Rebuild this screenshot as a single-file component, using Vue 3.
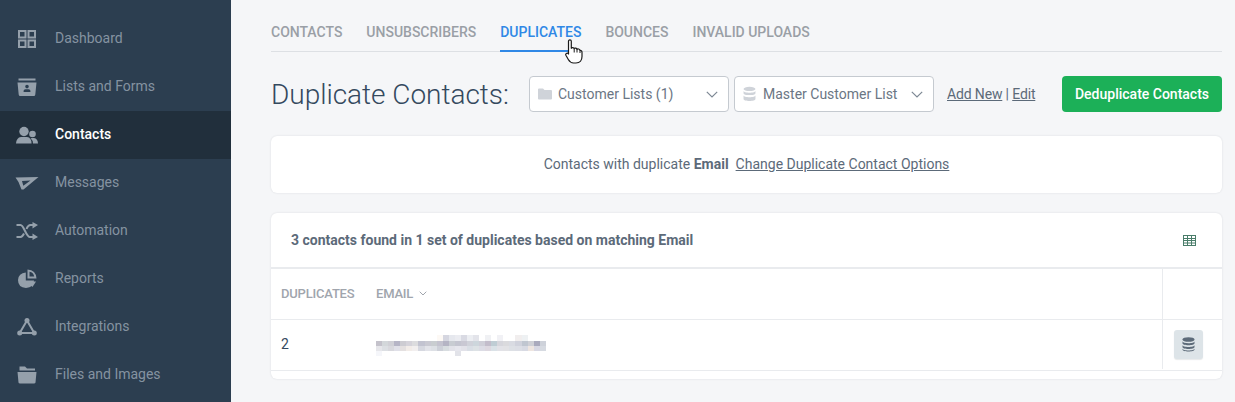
<script setup>
const navItems = [
  { label: 'Dashboard', icon: 'grid' },
  { label: 'Lists and Forms', icon: 'lists' },
  { label: 'Contacts', icon: 'users', active: true },
  { label: 'Messages', icon: 'plane' },
  { label: 'Automation', icon: 'shuffle' },
  { label: 'Reports', icon: 'pie' },
  { label: 'Integrations', icon: 'nodes' },
  { label: 'Files and Images', icon: 'folder' }
]
const tabs = [
  { label: 'Contacts' },
  { label: 'Unsubscribers' },
  { label: 'Duplicates', active: true },
  { label: 'Bounces' },
  { label: 'Invalid Uploads' }
]
const w = '#ffffff'
const pixelRows = [
  [w,w,w,w,w,w,w,w,w,w,'#fdf9f5','#d5d6e0','#e6e8ee','#ebecf1','#d9dae3','#eceef2','#e3e4ea',w,'#f0f1f4',w,'#f1f1f5',w,w,'#f1eeee','#eef1f3',w,w,w],
  ['#c4c2cb','#d3d7da','#d0d0d6','#b6b5c6','#cdccd2','#d5d3da','#dcdcde','#c2c3d0','#c9c9d2','#c9cdd0','#c4c3cf','#b5b4c4','#c8ccd2','#c4c5d0','#c9c8d3','#d0d2da','#cdd6dc','#cfcfd8','#c3bdcb','#bfcdd4','#d6d6dc','#dadadd','#d9dbe2','#d0d2dc','#c0c6d0','#cfd0d6','#aaaabd','#ced2da'],
  ['#e6e6ea','#dcdfe3','#d8d8dd','#e0e0e8','#e4e0e0','#f2ece8','#f2efef','#d6d8e0','#e2e3e9','#dde0e5','#cdd0d8','#d8dde0','#e2e2e9','#e6e6ed','#e2e2e9','#d9dee5','#dde2e5','#dcdce5','#ddd8e0','#dae2e7','#e2e2e7','#e2e2e5','#dde0e5','#dcdee5','#d8dae3','#eee5e0','#d8d8e3','#d6dae1'],
  ['#f5f6fa',w,w,w,w,w,w,w,w,w,w,w,w,'#e2e3e9',w,w,w,w,w,w,w,w,w,w,w,w,w,w]
]
const pixels = pixelRows.flat()
</script>

<template>
  <div class="app">
    <aside class="sidebar">
      <a v-for="item in navItems" :key="item.label" class="nav-item" :class="{ active: item.active }">
        <span class="nav-icon">
          <svg v-if="item.icon === 'grid'" width="20" height="20" viewBox="0 0 20 20" fill="none" stroke="currentColor" stroke-width="2">
            <rect x="2" y="2" width="6.5" height="6.5" /><rect x="11.5" y="2" width="6.5" height="6.5" />
            <rect x="2" y="11.5" width="6.5" height="6.5" /><rect x="11.5" y="11.5" width="6.5" height="6.5" />
          </svg>
          <svg v-else-if="item.icon === 'lists'" width="20" height="20" viewBox="0 0 20 20">
            <rect x="1.5" y="1.500" width="17" height="2" fill="currentColor" />
            <path fill="currentColor" fill-rule="evenodd" d="M0.5 5.500H19.5L18.3 17.5Q18.2 19 16.8 19H3.2Q1.8 19 1.7 17.500ZM10 7.800A1.800 1.800 0 1 0 10 11.400A1.800 1.800 0 1 0 10 7.800ZM6.600 15H13.400V13.800Q13.400 12.300 11.500 12.300H8.500Q6.600 12.300 6.600 13.800Z" />
          </svg>
          <svg v-else-if="item.icon === 'users'" width="24" height="20" viewBox="0 -1 24 20" fill="currentColor">
            <circle cx="9" cy="5.500" r="4.700" />
            <circle cx="17.500" cy="8" r="3.300" />
            <path d="M1 17.500Q1.500 11.500 6 11H12Q16.500 11.500 16.600 17.500Z" />
            <path d="M15.500 12.300Q16.500 11.800 19 12Q22.800 12.500 23 17.500H18Q18 14.500 15.500 12.300Z" />
          </svg>
          <svg v-else-if="item.icon === 'plane'" width="24" height="14" viewBox="0 -1 24 14" fill="currentColor">
            <path fill-rule="evenodd" d="M0.500 0.500L23.500 0L8.500 12.500H6.500L3.500 5ZM7 4L8.300 8.700L15.500 3.600Z" />
          </svg>
          <svg v-else-if="item.icon === 'shuffle'" width="22" height="18" viewBox="0 0 22 18" fill="none" stroke="currentColor" stroke-width="2">
            <path d="M0.500 3H4.500C8 3 10 15 14 15H18" />
            <path d="M0.500 15H4.500C6 15 7.300 13 8 11.500M10.500 7C11.500 4.500 12.500 3 14.500 3H18" />
            <path fill="currentColor" stroke="none" d="M16.500 0L22 3L16.500 6.500ZM16.500 11.500L22 15L16.500 18Z" />
          </svg>
          <svg v-else-if="item.icon === 'pie'" width="20" height="20" viewBox="0 0 20 20" fill="currentColor">
            <path d="M8.800 3.500V11.500H17Q16.800 18.500 9 19Q1 18.500 1 11Q1.500 4 8.800 3.500Z" />
            <path fill-rule="evenodd" d="M10.500 0.500Q19 1 19.500 9.500H10.500ZM12.500 2.800V7.500H17.200Q16.500 3.500 12.500 2.800Z" />
            <path d="M10.800 12.500H19L15.500 18Z" />
          </svg>
          <svg v-else-if="item.icon === 'nodes'" width="20" height="20" viewBox="0 0 20 20" fill="currentColor" stroke="currentColor">
            <circle cx="10" cy="3.500" r="2.500" stroke="none" /><circle cx="2.700" cy="16" r="2.500" stroke="none" /><circle cx="17.300" cy="16" r="2.500" stroke="none" />
            <path fill="none" stroke-width="2" d="M10 3.500L2.700 16H17.300Z" />
          </svg>
          <svg v-else width="20" height="18" viewBox="0 0 20 18" fill="currentColor">
            <path d="M2.500 0.500H8L10 2.500H18V4.500H2.500Z" />
            <path d="M0.500 6H19.500L18.500 16.500Q18.300 17.500 17 17.500H3Q1.700 17.500 1.500 16.500Z" />
          </svg>
        </span>
        <span class="nav-label">{{ item.label }}</span>
      </a>
    </aside>

    <main class="main">
      <nav class="tabs">
        <a v-for="tab in tabs" :key="tab.label" class="tab" :class="{ active: tab.active }">{{ tab.label }}</a>
      </nav>

      <div class="toolbar">
        <h1 class="title">Duplicate Contacts:</h1>
        <div class="selects">
          <div class="select">
            <svg class="sel-icon folder" width="14" height="12" viewBox="0 0 14 12" fill="currentColor">
              <path d="M0 1.500Q0 0.500 1 0.500H5L6.500 2H13Q14 2 14 3V10.500Q14 11.500 13 11.500H1Q0 11.500 0 10.500Z" />
            </svg>
            <span class="sel-text">Customer Lists (1)</span>
            <svg class="chev" width="12" height="7" viewBox="0 0 12 7" fill="none" stroke="currentColor" stroke-width="1.200"><path d="M0.800 0.800L6 6L11.200 0.800" /></svg>
          </div>
          <div class="select">
            <svg class="sel-icon" width="13" height="16" viewBox="0 0 12 14" fill="currentColor">
              <ellipse cx="6" cy="2.300" rx="5.500" ry="2" />
              <path d="M0.500 4V6.200C0.500 7.300 3 8 6 8S11.500 7.300 11.500 6.200V4C11.500 5.100 9 5.800 6 5.800S0.500 5.100 0.500 4Z" />
              <path d="M0.500 8.200V11.700C0.500 12.800 3 13.500 6 13.500S11.500 12.800 11.500 11.700V8.200C11.500 9.300 9 10 6 10S0.500 9.300 0.500 8.200Z" />
            </svg>
            <span class="sel-text">Master Customer List</span>
            <svg class="chev" width="12" height="7" viewBox="0 0 12 7" fill="none" stroke="currentColor" stroke-width="1.200"><path d="M0.800 0.800L6 6L11.200 0.800" /></svg>
          </div>
        </div>
        <div class="links"><a>Add New</a> | <a>Edit</a></div>
        <button class="primary" type="button">Deduplicate Contacts</button>
      </div>

      <section class="card notice">
        <span>Contacts with duplicate <b>Email</b></span>
        <a>Change Duplicate Contact Options</a>
      </section>

      <section class="card results">
        <header class="res-head">
          <strong>3 contacts found in 1 set of duplicates based on matching Email</strong>
          <svg width="13" height="11" viewBox="0 0 13 11" fill="none" stroke="#4a7d6a" stroke-width="1">
            <rect x="0.500" y="0.500" width="12" height="10" />
            <path d="M0.500 3.500H12.500M0.500 5.500H12.500M0.500 8H12.500M4.500 0.500V10.500M8.500 0.500V10.500" />
          </svg>
        </header>
        <div class="row head-row">
          <div class="c-dup">Duplicates</div>
          <div class="c-email">Email
            <svg width="8" height="5" viewBox="0 0 8 5" fill="none" stroke="currentColor" stroke-width="1"><path d="M0.700 0.700L4 4L7.300 0.700" /></svg>
          </div>
          <div class="c-act"></div>
        </div>
        <div class="row body-row">
          <div class="c-dup">2</div>
          <div class="c-email">
            <div class="pix"><i v-for="(color, i) in pixels" :key="i" :style="{ background: color }"></i></div>
          </div>
          <div class="c-act">
            <span class="db-btn">
              <svg width="13" height="15" viewBox="0 0 13 15" fill="#5d6b79">
                <ellipse cx="6.500" cy="2.500" rx="6" ry="2.300" />
                <path d="M0.500 4.200V6.300C0.500 7.500 3.200 8.300 6.500 8.300S12.500 7.500 12.500 6.300V4.200C12.500 5.500 9.800 6.200 6.500 6.200S0.500 5.500 0.500 4.200Z" />
                <path d="M0.500 8V10C0.500 11.200 3.200 12 6.500 12S12.500 11.200 12.500 10V8C12.500 9.300 9.800 10 6.500 10S0.500 9.300 0.500 8Z" />
                <path d="M0.500 11.500V12.500C0.500 13.700 3.200 14.500 6.500 14.500S12.500 13.700 12.500 12.500V11.500C12.500 12.800 9.800 13.500 6.500 13.500S0.500 12.800 0.500 11.500Z" />
              </svg>
            </span>
          </div>
        </div>
      </section>

      <svg class="cursor" width="18" height="25" viewBox="0 0 18 25">
        <path fill="#fff" stroke="#1a1a1a" stroke-width="1.200" stroke-linejoin="round"
          d="M3.500 2.200C3.500 0.300 6.300 0.300 6.300 2.200V9.300C6.500 8.300 9 8.300 9.200 9.700C9.500 8.700 11.800 8.900 12 10.400C12.500 9.500 14.800 10 15 11.500C15.800 11.200 17 11.800 17 13.300V17.500C17 21 15 24 11 24H8.500C5.500 24 4.500 22.500 3.300 20.500L0.900 16.300C0.100 14.800 2.200 13.300 3.500 15Z" />
        <path fill="none" stroke="#1a1a1a" stroke-width="1" d="M9.200 9.700V13.500M12 10.400V13.500M15 11.500V14" />
      </svg>
    </main>
  </div>
</template>

<style scoped>
.app {
  display: flex;
  width: 1235px;
  height: 402px;
  overflow: hidden;
  background: #f5f6f8;
  font-family: Roboto, "Liberation Sans", sans-serif;
  font-size: 14px;
  color: #5c6a79;
}
.sidebar {
  width: 231px;
  flex: none;
  background: #2c3e50;
  padding-top: 15px;
  box-sizing: border-box;
}
.nav-item {
  display: flex;
  align-items: center;
  height: 48px;
  color: #8593a1;
}
.nav-item.active {
  background: #212f3c;
}
.nav-item.active .nav-label {
  color: #fff;
  font-weight: 500;
}
.nav-icon {
  width: 24px;
  margin: 0 16px 0 15px;
  flex: none;
  display: flex;
  justify-content: center;
  align-items: center;
  color: #95a0ab;
}
.nav-label {
  padding-bottom: 2px;
}
.main {
  position: relative;
  flex: 1;
  min-width: 0;
  padding: 0 13px 0 40px;
}
.tabs {
  display: flex;
  gap: 24px;
  height: 52px;
  box-sizing: border-box;
  border-bottom: 1px solid #dde0e4;
}
.tab {
  height: 52px;
  box-sizing: border-box;
  padding-top: 24px;
  line-height: 16px;
  font-weight: 500;
  letter-spacing: -0.01px;
  text-transform: uppercase;
  color: #9a9fa6;
}
.tab.active {
  color: #2f88e6;
  border-bottom: 2px solid #2f88e6;
}
.toolbar {
  display: flex;
  align-items: center;
  height: 36px;
  margin-top: 24px;
}
.title {
  margin: 0;
  width: 258px;
  flex: none;
  font-size: 28px;
  font-weight: 300;
  letter-spacing: -0.03px;
  color: #34495e;
  white-space: nowrap;
}
.selects {
  display: flex;
  gap: 5px;
}
.select {
  display: flex;
  align-items: center;
  width: 200px;
  height: 36px;
  box-sizing: border-box;
  padding: 0 10px 0 8px;
  background: #fff;
  border: 1px solid #c5cad0;
  border-radius: 4px;
  color: #6b7684;
}
.sel-icon {
  color: #cfd3d9;
  flex: none;
  margin-right: 5px;
}
.sel-icon.folder {
  margin-right: 4px;
}
.sel-text {
  flex: 1;
  margin-left: 2px;
  white-space: nowrap;
}
.chev {
  color: #7d8894;
  flex: none;
}
.links {
  margin-left: 13px;
  width: 115px;
  flex: none;
  color: #5c6a79;
  letter-spacing: -0.15px;
  white-space: nowrap;
}
.links a {
  text-decoration: underline;
}
.primary {
  width: 160px;
  height: 36px;
  flex: none;
  border: 0;
  border-radius: 4px;
  background: #1cb058;
  color: #fff;
  font: 500 14px Roboto, "Liberation Sans", sans-serif;
}
.card {
  background: #fff;
  border-radius: 6px;
  box-shadow: 0 0 2px rgba(60, 70, 85, 0.16);
}
.notice {
  display: flex;
  justify-content: center;
  align-items: center;
  gap: 7px;
  height: 57px;
  margin-top: 24px;
  padding-bottom: 2px;
  box-sizing: border-box;
  color: #5c6a79;
}
.notice a {
  text-decoration: underline;
}
.notice b {
  font-weight: 700;
}
.results {
  margin-top: 20px;
  height: 166px;
}
.res-head {
  display: flex;
  align-items: center;
  justify-content: space-between;
  height: 56px;
  box-sizing: border-box;
  padding: 0 26px 0 20px;
  border-bottom: 2px solid #e9ebee;
}
.res-head strong {
  font-weight: 700;
  font-size: 14px;
  color: #5c6a79;
}
.row {
  display: flex;
  height: 51px;
  box-sizing: border-box;
  border-bottom: 1px solid #e9ebee;
}
.head-row {
  font-size: 13px;
  font-weight: 500;
  letter-spacing: -0.2px;
  text-transform: uppercase;
  color: #a0a5ad;
}
.head-row .c-dup,
.head-row .c-email {
  padding-bottom: 1px;
}
.body-row {
  color: #34495e;
  font-size: 14px;
  padding-bottom: 1px;
}
.body-row .c-dup {
  padding-bottom: 2px;
}
.c-dup {
  width: 105px;
  box-sizing: border-box;
  padding-left: 10px;
  flex: none;
  display: flex;
  align-items: center;
  white-space: nowrap;
}
.c-email {
  flex: 1;
  box-sizing: border-box;
  display: flex;
  align-items: center;
  gap: 6px;
}
.c-act {
  width: 60px;
  flex: none;
  border-left: 1px solid #e9ebee;
  box-sizing: border-box;
  padding-right: 9px;
  display: flex;
  align-items: center;
  justify-content: center;
}
.pix {
  display: grid;
  grid-template-columns: repeat(28, 6.07px);
  grid-template-rows: 6px 5px 5px 5px;
  width: 170px;
  margin-top: 2px;
}
.pix i {
  display: block;
}
.db-btn {
  display: flex;
  align-items: center;
  justify-content: center;
  width: 29px;
  height: 29px;
  border-radius: 3px;
  background: #dde4e8;
  box-shadow: 0 1px 1px rgba(60, 70, 85, 0.12);
}
.cursor {
  position: absolute;
  left: 334px;
  top: 39px;
}
</style>
